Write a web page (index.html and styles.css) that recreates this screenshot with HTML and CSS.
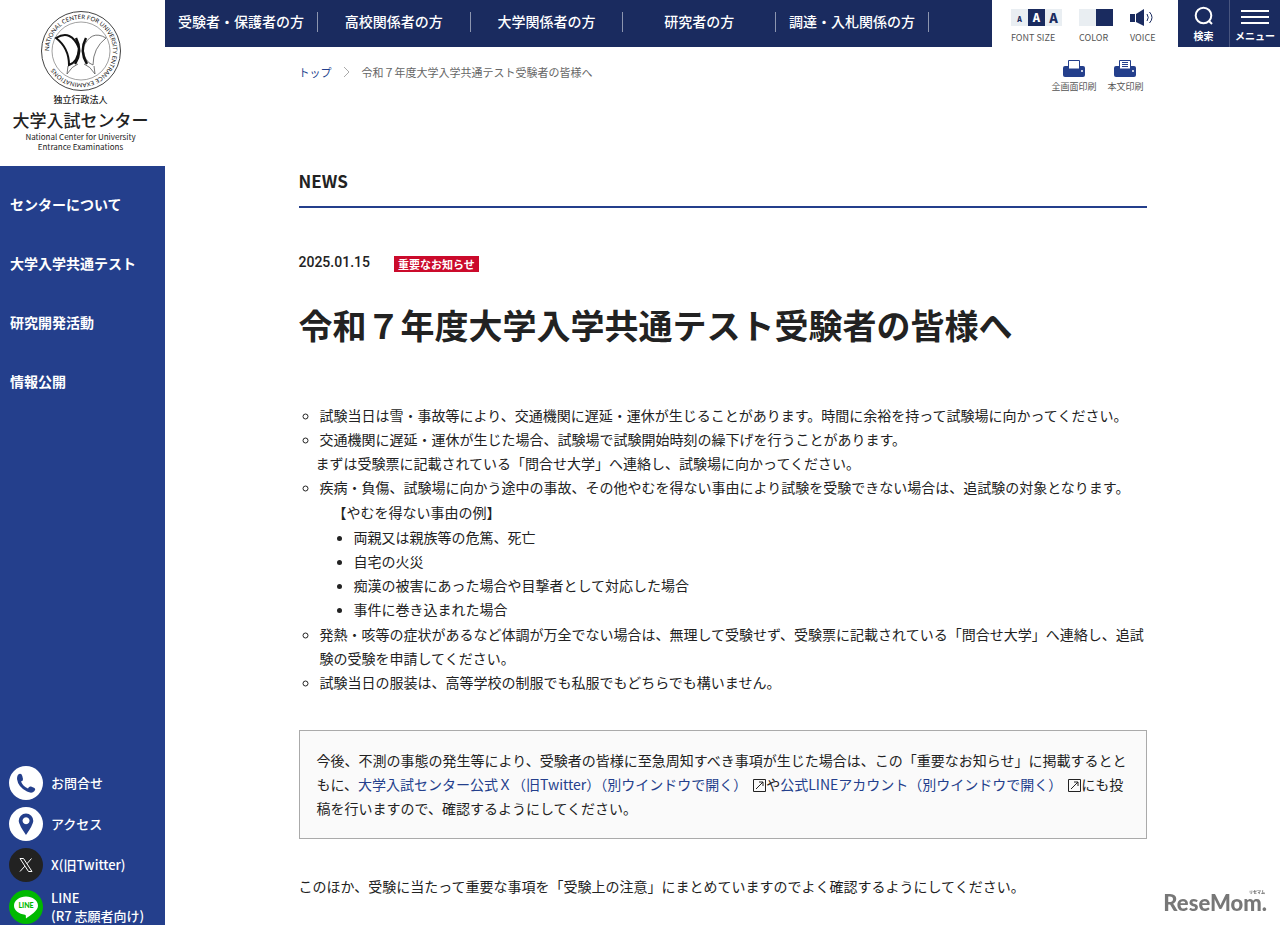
FILE: index.html
```html
<!DOCTYPE html>
<html lang="ja">
<head>
    <meta charset="UTF-8">
    <meta name="viewport" content="width=device-width, initial-scale=1.0">
    <title>令和７年度大学入学共通テスト受験者の皆様へ | 大学入試センター</title>
    <link rel="stylesheet" href="styles.css">
</head>
<body>
    <aside class="side">
        <a class="logo" href="#">
            <svg class="emblem" viewBox="0 0 82 82" aria-hidden="true">
                <defs><path id="ring" d="M9 41A32 32 0 0 1 73 41A32 32 0 0 1 9 41"/></defs>
                <circle cx="41" cy="41" r="39.500" fill="none" stroke="#444"/>
                <circle cx="41" cy="41" r="29" fill="none" stroke="#777" stroke-width=".7"/>
                <text><textPath href="#ring">NATIONAL CENTER FOR UNIVERSITY ENTRANCE EXAMINATIONS</textPath></text>
                <path d="M16 28Q31 19 39 38Q38 52 29 55Q29 38 16 28Z" fill="none" stroke="#111" stroke-width="2"/>
                <path d="M66 28Q51 19 43 38Q44 52 53 55Q53 38 66 28Z" fill="none" stroke="#555" stroke-width=".8"/>
                <path d="M36 28Q43 41 35 54M46 28Q39 41 47 54" fill="none" stroke="#111" stroke-width="2.500"/>
                <path d="M28 56L27 64Q32 56 38 54M54 56L55 64Q50 56 44 54" fill="none" stroke="#555" stroke-width=".8"/>
            </svg>
            <span class="corp">独立行政法人</span>
            <span class="name">大学入試センター</span>
            <span class="en">National Center for University<br>Entrance Examinations</span>
        </a>
        <nav class="side_menu">
            <a href="#">センターについて</a>
            <a href="#">大学入学共通テスト</a>
            <a href="#">研究開発活動</a>
            <a href="#">情報公開</a>
        </nav>
        <ul class="side_link">
            <li><a href="#">
                <svg viewBox="0 0 34 34"><circle cx="17" cy="17" r="17" fill="#fff"/><path d="M10 8Q12.500 7 13.300 10L14 13Q14.200 15 12 15.500Q14 20.500 19 22.500Q20 20 22 20.500L25.500 22Q27 23 25.500 25Q23 28 18 25.500Q9 21 8 13Q8 9 10 8Z" fill="#243f8c"/></svg>
                <span>お問合せ</span></a></li>
            <li><a href="#">
                <svg viewBox="0 0 34 34"><circle cx="17" cy="17" r="17" fill="#fff"/><path fill-rule="evenodd" d="M17 6.500A7.300 7.300 0 0 1 24.300 14Q24 18 17 28Q10 18 9.700 14A7.300 7.300 0 0 1 17 6.500ZM17 10.300A3.500 3.500 0 1 0 17.100 10.300Z" fill="#243f8c"/></svg>
                <span>アクセス</span></a></li>
            <li><a href="#">
                <svg viewBox="0 0 34 34"><circle cx="17" cy="17" r="17" fill="#222"/><path d="M11 10.500H14.500L23 23.500H19.500ZM22.500 10.500L18 15.700M15.800 18.200L11 23.500" fill="none" stroke="#fff"/></svg>
                <span>X(旧Twitter)</span></a></li>
            <li><a href="#">
                <svg viewBox="0 0 34 34"><circle cx="17" cy="17" r="17" fill="#00b900"/><path d="M17 6.500C23.500 6.500 29 10.500 29 15.700C29 21 21 25.500 17 28.500C16.500 27 17.500 25 16 24.700C10 24 5 20.500 5 15.700C5 10.500 10.500 6.500 17 6.500Z" fill="#fff"/><text class="line_mark" x="17" y="18">LINE</text></svg>
                <span>LINE<br>(R7 志願者向け)</span></a></li>
        </ul>
    </aside>

    <div class="page">
        <header>
            <nav class="target">
                <a href="#">受験者・保護者の方</a>
                <a href="#">高校関係者の方</a>
                <a href="#">大学関係者の方</a>
                <a href="#">研究者の方</a>
                <a href="#">調達・入札関係の方</a>
            </nav>
            <div class="tools">
                <div class="tool">
                    <div class="swatch">
                        <button class="small" aria-label="文字サイズ小">A</button>
                        <button class="on" aria-label="文字サイズ中">A</button>
                        <button class="large" aria-label="文字サイズ大">A</button>
                    </div>
                    <span>FONT SIZE</span>
                </div>
                <div class="tool">
                    <div class="swatch">
                        <button aria-label="標準の配色"></button>
                        <button class="on" aria-label="反転した配色"></button>
                    </div>
                    <span>COLOR</span>
                </div>
                <button class="tool voice">
                    <svg viewBox="0 0 24 17"><path d="M0 5H5V13H0ZM6 5L14 0V17L6 13Z" fill="#1a2b5f"/><path d="M17 5Q19.500 8.500 17 12M19.500 3Q24.500 8.500 19.500 14" fill="none" stroke="#1a2b5f"/></svg>
                    <span>VOICE</span>
                </button>
            </div>
            <button class="head_btn">
                <svg viewBox="0 0 20 20"><circle cx="9.500" cy="9.500" r="7.800"/><path d="M15 15L18 18"/></svg>
                <span>検索</span>
            </button>
            <button class="head_btn">
                <svg class="bars" viewBox="0 0 28 20"><path d="M0 5H28M0 11H28M0 17H28"/></svg>
                <span>メニュー</span>
            </button>
        </header>

        <main>
            <div class="sub">
                <nav class="crumb">
                    <a href="#">トップ</a>
                    <svg viewBox="0 0 7 12"><path d="M1 1L6 6L1 11"/></svg>
                    <span>令和７年度大学入学共通テスト受験者の皆様へ</span>
                </nav>
                <div class="print">
                    <button>
                        <svg viewBox="0 0 22 18"><path d="M2 6H20Q22 6 22 8V15Q22 17 20 17H2Q0 17 0 15V8Q0 6 2 6Z" fill="#243f8c"/><path d="M5.500 .500H16.500V9H5.500Z" fill="#fff" stroke="#243f8c"/><circle cx="19" cy="11" r="1" fill="#fff"/></svg>
                        <span>全画面印刷</span>
                    </button>
                    <button>
                        <svg viewBox="0 0 22 18"><path d="M2 6H20Q22 6 22 8V15Q22 17 20 17H2Q0 17 0 15V8Q0 6 2 6Z" fill="#243f8c"/><path d="M5.500 .500H16.500V9H5.500Z" fill="#fff" stroke="#243f8c"/><path d="M8 2.500H14M8 4.500H14M8 6.500H14" stroke="#243f8c"/><circle cx="19" cy="11" r="1" fill="#fff"/></svg>
                        <span>本文印刷</span>
                    </button>
                </div>
            </div>

            <p class="category">NEWS</p>
            <article>
                <div class="meta">
                    <time datetime="2025-01-15">2025.01.15</time>
                    <span class="label">重要なお知らせ</span>
                </div>
                <h1>令和７年度大学入学共通テスト受験者の皆様へ</h1>

                <ul class="list">
                    <li>試験当日は雪・事故等により、交通機関に遅延・運休が生じることがあります。時間に余裕を持って試験場に向かってください。</li>
                    <li>交通機関に遅延・運休が生じた場合、試験場で試験開始時刻の繰下げを行うことがあります。
                        <p class="next">まずは受験票に記載されている「問合せ大学」へ連絡し、試験場に向かってください。</p>
                    </li>
                    <li>疾病・負傷、試験場に向かう途中の事故、その他やむを得ない事由により試験を受験できない場合は、追試験の対象となります。
                        <p class="example">【やむを得ない事由の例】</p>
                        <ul>
                            <li>両親又は親族等の危篤、死亡</li>
                            <li>自宅の火災</li>
                            <li>痴漢の被害にあった場合や目撃者として対応した場合</li>
                            <li>事件に巻き込まれた場合</li>
                        </ul>
                    </li>
                    <li>発熱・咳等の症状があるなど体調が万全でない場合は、無理して受験せず、受験票に記載されている「問合せ大学」へ連絡し、追試験の受験を申請してください。</li>
                    <li>試験当日の服装は、高等学校の制服でも私服でもどちらでも構いません。</li>
                </ul>

                <p class="notice">今後、不測の事態の発生等により、受験者の皆様に至急周知すべき事項が生じた場合は、この「重要なお知らせ」に掲載するとともに、<a href="#">大学入試センター公式Ｘ（旧Twitter）（別ウインドウで開く）<svg viewBox="0 0 13 13"><path d="M.500 .500H12.500V12.500H.500ZM3 10L10 3M6 3H10V7"/></svg></a>や<a href="#">公式LINEアカウント（別ウインドウで開く）<svg viewBox="0 0 13 13"><path d="M.500 .500H12.500V12.500H.500ZM3 10L10 3M6 3H10V7"/></svg></a>にも投稿を行いますので、確認するようにしてください。</p>

                <p>このほか、受験に当たって重要な事項を「受験上の注意」にまとめていますのでよく確認するようにしてください。</p>
            </article>
        </main>
    </div>

    <div class="credit"><small>リセマム</small>ReseMom.</div>
</body>
</html>
```
FILE: styles.css
```css
* { box-sizing: border-box; }
body, h1, p, ul, button { margin: 0; padding: 0; }
ul { list-style: none; }
a { color: inherit; text-decoration: none; }
button { border: 0 none; background: transparent; color: inherit; font: inherit; cursor: pointer; }
svg { display: block; }
body {
    font-family: "Noto Sans CJK JP", sans-serif;
    font-size: 14px;
    line-height: 24px;
    color: #222;
    background: #fff;
    display: grid;
    grid-template-columns: 165px minmax(0, 1fr);
}

/* サイドバー */
.side {
    height: 100vh;
    background: #243f8c;
    color: #fff;
    display: flex;
    flex-direction: column;
    position: sticky;
    top: 0;
}
.logo {
    height: 166px;
    padding: 10px 4px 0 0;
    background: #fff;
    color: #222;
    text-align: center;
    display: flex;
    flex-direction: column;
    align-items: center;
    flex-shrink: 0;
}
.emblem { width: 82px; height: 82px; }
.emblem text { font-family: Lato, sans-serif; font-size: 6px; fill: #111; }
.logo .corp { font-size: 9px; line-height: 16px; font-weight: 500; }
.logo .name { font-size: 17px; line-height: 24px; font-weight: 500; }
.logo .en { font-size: 8px; line-height: 10px; white-space: nowrap; }
.side_menu { padding-top: 9px; font-weight: 700; }
.side_menu a { display: block; padding: 18px 10px; line-height: 23px; }
.side_link {
    margin-top: auto;
    padding-left: 9px;
    font-size: 13px;
    line-height: 18px;
    font-weight: 500;
    display: flex;
    flex-direction: column;
    gap: 7px;
}
.side_link a { display: flex; align-items: center; gap: 8px; }
.side_link svg { width: 34px; height: 34px; flex-shrink: 0; }
.line_mark { font-family: Lato, sans-serif; font-size: 7px; font-weight: 900; fill: #00b900; text-anchor: middle; }

/* ヘッダー */
header { height: 47px; display: flex; }
.target {
    flex: 1;
    padding-right: 63px;
    background: #1a2b5f;
    color: #fff;
    font-weight: 500;
    display: flex;
    align-items: center;
}
.target a {
    flex: 1;
    height: 20px;
    line-height: 18px;
    margin-bottom: 4px;
    text-align: center;
    white-space: nowrap;
    border-right: 1px solid #8c95af;
}
.tools {
    width: 186px;
    padding: 9px 0 0 19px;
    display: flex;
    align-items: flex-start;
    gap: 17px;
    color: #555;
    font-size: 9px;
    line-height: 24px;
}
.tool { display: flex; flex-direction: column; }
.tool > span { white-space: nowrap; }
.swatch { display: flex; }
.swatch button { width: 17px; height: 17px; background: #e9eef2; color: #1a2b5f; font-size: 11px; line-height: 17px; font-weight: 900; }
.swatch .small { font-size: 7px; line-height: 20px; }
.swatch .large { font-size: 13px; }
.swatch .on { background: #1a2b5f; color: #fff; }
.voice svg { width: 24px; height: 17px; }
.head_btn {
    width: 51px;
    padding-top: 6px;
    background: #1a2b5f;
    color: #fff;
    font-size: 10px;
    line-height: 20px;
    font-weight: 700;
    white-space: nowrap;
    display: flex;
    flex-direction: column;
    align-items: center;
}
.head_btn + .head_btn { border-left: 1px solid #48557f; }
.head_btn svg { width: 20px; height: 20px; fill: none; stroke: #fff; stroke-width: 2; }
.head_btn .bars { width: 28px; }

/* 本文 */
main { max-width: 848px; margin: 0 auto; padding-bottom: 26px; }
.sub { display: flex; justify-content: space-between; align-items: flex-start; padding-top: 13px; font-size: 11px; }
.crumb { display: flex; align-items: center; color: #666; }
.crumb a { color: #243f8c; }
.crumb svg { width: 7px; height: 12px; margin: 0 12px 0 11px; fill: none; stroke: #aaa; }
.print { display: flex; gap: 11px; font-size: 9px; line-height: 18px; color: #555; padding-right: 3px; }
.print button { display: flex; flex-direction: column; align-items: center; }
.print svg { width: 22px; height: 18px; }
.category {
    margin-top: 73px;
    padding-bottom: 13px;
    border-bottom: 2px solid #243f8c;
    font-size: 17px;
    font-weight: 700;
}
.meta { display: flex; align-items: center; gap: 24px; margin-top: 42px; }
.meta time { font-family: Roboto, sans-serif; font-weight: 500; }
.label { padding: 0 4px; margin-top: 3px; background: #cb0a2b; color: #fff; font-size: 11px; line-height: 16px; font-weight: 700; }
h1 { margin-top: 26px; font-size: 34px; line-height: 50px; font-weight: 700; }
.list { margin: 53px 0 36px; padding-left: 21px; list-style: circle; }
.list .next { margin-left: -4px; }
.list .example { margin: 1px 0 0 13px; }
.list ul { margin: 1px 0; padding-left: 34px; list-style: disc; }
.notice { margin-bottom: 35px; padding: 17px 17px 18px; background: #fafafa; border: 1px solid #aaa; }
.notice a { color: #243f8c; }
.notice svg { display: inline-block; width: 13px; height: 13px; margin-left: 6px; vertical-align: -2px; fill: none; stroke: #222; }

/* 画面右下のロゴ */
.credit {
    position: fixed;
    right: 13px;
    bottom: 10px;
    color: #777;
    font-family: Lato, sans-serif;
    font-size: 22px;
    font-weight: 900;
}
.credit small { position: absolute; right: 2px; top: -11px; font-family: "Noto Sans CJK JP", sans-serif; font-size: 4px; }
```
